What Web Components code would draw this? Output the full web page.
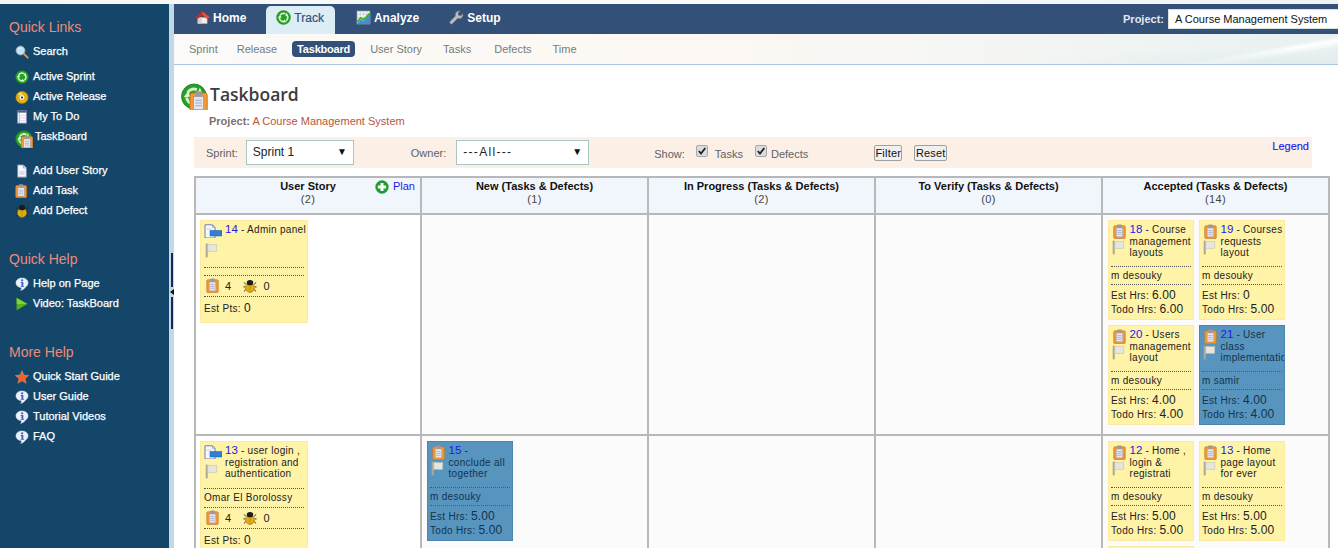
<!DOCTYPE html>
<html>
<head>
<meta charset="utf-8">
<title>Taskboard</title>
<style>
  html, body { margin: 0; height: 548px; overflow: hidden; background: #fff; }
  body { font-family: "Liberation Sans", Arial, sans-serif; font-size: 11px; }
</style>
</head>
<body>
<app-shell>
  <side-bar slot="side"></side-bar>
  <top-nav slot="top"></top-nav>
  <sub-nav slot="top"></sub-nav>
  <page-title></page-title>
  <filter-bar></filter-bar>
  <task-board>
    <board-head title="User Story" count="2" plan></board-head>
    <board-head title="New (Tasks &amp; Defects)" count="1"></board-head>
    <board-head title="In Progress (Tasks &amp; Defects)" count="2"></board-head>
    <board-head title="To Verify (Tasks &amp; Defects)" count="0"></board-head>
    <board-head title="Accepted (Tasks &amp; Defects)" count="14"></board-head>

    <board-cell first><story-card num="14" tasks="4" defects="0" pts="0">Admin panel</story-card></board-cell>
    <board-cell></board-cell>
    <board-cell></board-cell>
    <board-cell></board-cell>
    <board-cell>
      <task-card num="18" owner="m desouky" est="6.00" todo="6.00">Course management layouts</task-card>
      <task-card num="19" owner="m desouky" est="0" todo="5.00">Courses requests layout</task-card>
      <task-card num="20" owner="m desouky" est="4.00" todo="4.00">Users management layout</task-card>
      <task-card num="21" owner="m samir" est="4.00" todo="4.00" blue>User class implementation</task-card>
    </board-cell>

    <board-cell first><story-card num="13" owner="Omar El Borolossy" tasks="4" defects="0" pts="0">user login , registration and authentication</story-card></board-cell>
    <board-cell><task-card num="15" owner="m desouky" est="5.00" todo="5.00" blue><br>conclude all together</task-card></board-cell>
    <board-cell></board-cell>
    <board-cell></board-cell>
    <board-cell>
      <task-card num="12" owner="m desouky" est="5.00" todo="5.00">Home , login &amp; registrati</task-card>
      <task-card num="13" owner="m desouky" est="5.00" todo="5.00">Home page layout for ever</task-card>
      <task-card></task-card>
    </board-cell>
  </task-board>
</app-shell>

<script>
const RECYCLE = `
  <circle cx="8" cy="8" r="7.400" fill="#25a025" stroke="#1c7f1c" stroke-width=".5"/>
  <circle cx="8" cy="8" r="4.400" fill="none" stroke="#d4f3c4" stroke-width="1.700" stroke-dasharray="6.200 3" transform="rotate(-30 8 8)"/>
  <path d="M11.500 2.800 13.300 7 9.800 6zM11.300 13 6.800 13.300 8.700 10.200zM1.900 8.400 4.600 4.800 5.800 8.200z" fill="#e2f8d6"/>`;
const CLIP = `
  <rect x=".8" y="1.800" width="12.400" height="14" rx="1.500" fill="#f39a34" stroke="#c87420" stroke-width=".7"/>
  <rect x="3.400" y="4.200" width="7.200" height="9.600" fill="#e4e6f2" stroke="#8f8fa8" stroke-width=".5"/>
  <rect x="4.500" y="0.400" width="5" height="3.600" rx="1" fill="#9a9a9e"/>
  <path d="M4.600 7h4.800M4.600 9h4.800M4.600 11h4.800" stroke="#a4a8c0" stroke-width=".8"/>`;
const INFO = `
  <path d="M8 1C4 1 1 3.400 1 6.600s2.800 5.400 6 5.500c.4 1.300.2 2.400-.6 3.400 2.600-.7 4.500-2 5.700-4 1.800-1 2.900-2.700 2.900-4.900C15 3.400 12 1 8 1z" fill="#eef1fb" stroke="#c4cbe6" stroke-width=".5"/>
  <circle cx="8.200" cy="3.800" r="1.300" fill="#2d63c8"/>
  <path d="M6.600 5.800h2.900v4.400h.9v1H6.500v-1h.9V6.800h-.8z" fill="#2d63c8"/>`;
const FLAG_SHAPE = `
  <rect x="1.800" y="1" width="2.200" height="15" rx=".7" fill="#a9a99c"/>
  <path d="M4 2.500c3-1.400 5 .6 9.500-.6v7.400c-4.500 1.200-6.500-.8-9.500.6z" fill="#e6e6de" stroke="#bdbdb0" stroke-width=".6"/>`;
const BUG = `
  <path d="M3.300 6 1 4M2.500 9H.5M3.300 12 1 14.200M12.700 6 15 4M13.500 9h2M12.700 12l2.300 2.200" stroke="#222" stroke-width="1"/>
  <ellipse cx="8" cy="10" rx="5.300" ry="5.400" fill="#e0ab12" stroke="#8a6a08" stroke-width=".6"/>
  <path d="M8 5v10" stroke="#9c7608" stroke-width=".5"/>
  <ellipse cx="8" cy="4.200" rx="3.700" ry="3" fill="#1c1c1c"/>`;

const ICONS = {
  search: `<circle cx="6.300" cy="6.300" r="5" fill="#bfe3f7" stroke="#9fb0bb" stroke-width="1.100"/><path d="M3.800 5c.8-1.300 2-1.700 3.200-1.500" stroke="#fff" stroke-width="1.100" fill="none"/><path d="m10.300 10.300 4.200 4.200" stroke="#e8923c" stroke-width="2.200" stroke-linecap="round"/>`,
  recycle: RECYCLE,
  cd: `<circle cx="8" cy="8.500" r="7" fill="#e3b016" stroke="#a87e08" stroke-width=".7"/><path d="M3 5.500A6 6 0 0 1 8 2.700v3.300z" fill="#f7dc70"/><circle cx="8" cy="8.500" r="2.800" fill="#f5f1e0"/><circle cx="8" cy="8.500" r="1.200" fill="#222"/>`,
  notepad: `<rect x="3" y="1" width="10" height="14" fill="#fbfbff" stroke="#8e92b8" stroke-width="1"/><rect x="3" y="1" width="10" height="2" fill="#555a70"/><path d="M5 3v12" stroke="#e28b86" stroke-width=".8"/><path d="M5 6h8M5 9h8M5 12h8" stroke="#c6cbe4" stroke-width=".7"/>`,
  doc: `<path d="M3 1h6.500L13 4.500V15H3z" fill="#f6f7fc" stroke="#7c86ac" stroke-width="1"/><path d="M9.500 1v3.500H13" fill="#dfe3f2" stroke="#7c86ac" stroke-width=".7"/><path d="M5 8h6v4.500H5z" fill="#d7dcee"/>`,
  clip: CLIP,
  bug: BUG,
  info: INFO,
  play: `<path d="M2 1v14l12-7z" fill="#56b51e" stroke="#3c8f12" stroke-width=".6"/><path d="M2 1v7h12z" fill="#82d23a"/>`,
  star: `<path d="M8 .8 10.200 5.800l5.300.5-4 3.600 1.200 5.300L8 12.400 3.300 15.200l1.200-5.300-4-3.600 5.300-.5z" fill="#f2602d" stroke="#e8a488" stroke-width=".5"/>`,
  home: `<path d="M3 8h10v6.500H3z" fill="#f3eee8" stroke="#b8ada0" stroke-width=".5"/><path d="M3 8h4v6.500H3z" fill="#d9cfc2"/><path d="M.2 8 8 1.200 15.800 8 13 9.400 8 5.300 3 9.400z" fill="#cf2b1f"/><path d="M8 1.200 15.800 8 13 9.400 8 5.300z" fill="#e8503a"/>`,
  chart: `<rect x="1" y="1" width="14" height="14" fill="#f4f6fa" stroke="#7e8794" stroke-width=".7"/><path d="M1 4.500h14M1 8h14M1 11.500h14M4.500 1v14M8 1v14M11.500 1v14" stroke="#aab2bf" stroke-width=".5"/><path d="M1 15l4-5 3 2 7-8v11z" fill="#3f8fd8"/><path d="M1 13l4-4.500 3 2 7-7" fill="none" stroke="#38b526" stroke-width="2"/>`,
  wrench: `<path d="M10.500 1a4 4 0 0 0-3.600 5.400L1.300 12a1.700 1.700 0 0 0 2.500 2.500l5.600-5.600A4 4 0 0 0 14.800 4l-2.300 2.200-2.300-.6-.6-2.300L12 1.200A4 4 0 0 0 10.500 1z" fill="#b9bcc0" stroke="#6e7276" stroke-width=".6"/>`,
  story: `<path d="M1 .8h7.500L11 3.300V14H1z" fill="#f6f8fd" stroke="#6d7fb0" stroke-width="1"/><path d="M8.500.8v2.500H11" fill="none" stroke="#6d7fb0" stroke-width=".6"/><path d="M2.500 5h5" stroke="#b7c2de" stroke-width=".8"/><rect x="6" y="6.500" width="12" height="5.500" fill="#2f7fd6" stroke="#1f5fae" stroke-width=".5"/>`,
  flag: FLAG_SHAPE,
  plus: `<circle cx="8" cy="8" r="7.300" fill="#1d9e2b" stroke="#14802a" stroke-width=".5"/><path d="M6.300 3.300h3.400v3h3v3.400h-3v3H6.300v-3h-3V6.300h3z" fill="#fff"/>`,
  board: `<g>${RECYCLE}</g><g transform="translate(5 4.500) scale(.82)">${CLIP}</g>`
};

class UiIcon extends HTMLElement {
  connectedCallback() {
    const name = this.getAttribute("name");
    const w = this.getAttribute("w") || 16;
    const h = this.getAttribute("h") || w;
    const box = this.getAttribute("box") || "0 0 16 16";
    this.attachShadow({ mode: "open" }).innerHTML = `
      <style>:host{display:inline-block;width:${w}px;height:${h}px;line-height:0;flex:none}</style>
      <svg xmlns="http://www.w3.org/2000/svg" width="${w}" height="${h}" viewBox="${box}">${ICONS[name]}</svg>`;
  }
}
customElements.define("ui-icon", UiIcon);

class AppShell extends HTMLElement {
  constructor() {
    super();
    this.attachShadow({ mode: "open" }).innerHTML = `
      <style>
        :host { display: block; width: 1338px; height: 548px; overflow: hidden; background: linear-gradient(90deg,#f4f6f6,#fbfbfa 50%,#eef3f4); }
        .wrap { display: flex; height: 544px; margin-top: 4px; }
        .strip { width: 5px; background: #c3d8e6; padding-top: 249px; box-sizing: border-box; display: flex; flex-direction: column; align-items: center; flex: none; }
        .line { width: 2px; background: #16285e; margin-left: 1px; }
        .arrow { width: 0; height: 0; border: 3.500px solid transparent; border-right: 4px solid #111; border-left: 0; margin: 2px 0 2px; }
        main { flex: 1; min-width: 0; display: flex; flex-direction: column; overflow: hidden; }
        .page { flex: 1; background: #fff; padding: 18px 0 0 6px; overflow: hidden; }
      </style>
      <div class="wrap">
        <slot name="side"></slot>
        <div class="strip"><div class="line" style="height:34px"></div><div class="arrow"></div><div class="line" style="height:32px"></div></div>
        <main>
          <slot name="top"></slot>
          <div class="page"><slot></slot></div>
        </main>
      </div>`;
  }
}
customElements.define("app-shell", AppShell);

class SideBar extends HTMLElement {
  constructor() {
    super();
    const link = (icon, text, extra = "") =>
      `<a class="${extra}"><ui-icon name="${icon}" w="${icon === "board" ? 18 : 14}" h="${icon === "board" ? 18 : 14}"></ui-icon><span>${text}</span></a>`;
    this.attachShadow({ mode: "open" }).innerHTML = `
      <style>
        :host { display: block; width: 169px; flex: none; background: #14466a; color: #fff; padding-top: 14px; box-sizing: border-box; }
        h3 { margin: 0 0 6px 9px; font: 14px/18px "Liberation Sans", Arial, sans-serif; color: #ee8a78; }
        .group { margin-bottom: 5px; }
        a { display: flex; align-items: center; height: 20px; padding-left: 15px; gap: 4px; font-size: 11px; -webkit-text-stroke: .25px #fff; white-space: nowrap; }
        a span { margin-top: -2px; }
        a.tb { padding-left: 15px; gap: 2px; }
        a.tb ui-icon { margin-top: 4px; }
        a.tb span { margin-top: -2px; }
        .sec { margin-top: 29px; }
        .adds { margin-top: 14px; }
      </style>
      <h3>Quick Links</h3>
      <div class="group">${link("search", "Search")}</div>
      <div>
        ${link("recycle", "Active Sprint")}
        ${link("cd", "Active Release")}
        ${link("notepad", "My To Do")}
        ${link("board", "TaskBoard", "tb")}
      </div>
      <div class="adds">
        ${link("doc", "Add User Story")}
        ${link("clip", "Add Task")}
        ${link("bug", "Add Defect")}
      </div>
      <div class="sec">
        <h3>Quick Help</h3>
        ${link("info", "Help on Page")}
        ${link("play", "Video: TaskBoard")}
      </div>
      <div class="sec">
        <h3>More Help</h3>
        ${link("star", "Quick Start Guide")}
        ${link("info", "User Guide")}
        ${link("info", "Tutorial Videos")}
        ${link("info", "FAQ")}
      </div>`;
  }
}
customElements.define("side-bar", SideBar);

class TopNav extends HTMLElement {
  constructor() {
    super();
    const tab = (icon, text, cls = "") => `<a class="${cls}"><ui-icon name="${icon}" w="15" h="15"></ui-icon>${text}</a>`;
    this.attachShadow({ mode: "open" }).innerHTML = `
      <style>
        :host { display: flex; align-items: flex-end; height: 30px; background: #325078; padding-left: 21px; color: #fff; flex: none; }
        a { display: flex; align-items: center; gap: 3px; height: 28px; font-weight: bold; font-size: 12px; padding-bottom: 5px; box-sizing: border-box; }
        a.on { background: #dcedf5; color: #325078; border-radius: 5px 5px 0 0; padding: 0 11px 5px 10px; margin: 0 21px 0 20px; font-weight: normal; -webkit-text-stroke: .2px #325078; }
        .tabs { display: flex; }
        .tabs a.far { margin-left: 30px; }
        .proj { margin-left: auto; display: flex; align-items: center; gap: 4px; height: 30px; font-weight: bold; font-size: 11px; color: #e4e8ee; }
        .proj div { width: 170px; height: 20px; box-sizing: border-box; background: #fff; border: 1px solid #d5e3dc; border-right: 0; color: #111; font: 11px/19px "Liberation Sans", Arial, sans-serif; padding-left: 6px; white-space: nowrap; overflow: hidden; }
      </style>
      <div class="tabs">
        ${tab("home", "Home")}
        ${tab("recycle", "Track", "on")}
        ${tab("chart", "Analyze")}
        ${tab("wrench", "Setup", "far")}
      </div>
      <div class="proj">Project: <div>A Course Management System</div></div>`;
  }
}
customElements.define("top-nav", TopNav);

class SubNav extends HTMLElement {
  constructor() {
    super();
    const items = [["Sprint", 0], ["Release", -1], ["Taskboard", 0], ["User Story", 0], ["Tasks", 1], ["Defects", 3], ["Time", 1]];
    this.attachShadow({ mode: "open" }).innerHTML = `
      <style>
        :host { display: flex; align-items: center; gap: 10px; height: 31px; box-sizing: border-box; padding: 0 0 1px 10px; border-bottom: 1px solid #a9c4e0; flex: none;
          background:
            radial-gradient(ellipse 300px 16px at 1150px 30px, #e2ecec, transparent),
            linear-gradient(170deg, transparent 88%, #fff 90%, transparent 93%),
            linear-gradient(90deg, #fbfaf8, #fdf8f3 45%, #f3f5f3 75%, #e8f0f1); }
        a { padding: 2px 5px; font-size: 11px; line-height: 12px; color: #6f7d80; border-radius: 4px; }
        a.on { background: #325078; color: #fff; font-weight: bold; letter-spacing: -.2px; }
      </style>
      ${items.map(([t, off]) => `<a class="${t === "Taskboard" ? "on" : ""}" style="margin-left:${off}px">${t}</a>`).join("")}`;
  }
}
customElements.define("sub-nav", SubNav);

class PageTitle extends HTMLElement {
  constructor() {
    super();
    this.attachShadow({ mode: "open" }).innerHTML = `
      <style>
        :host { display: block; }
        .row { display: flex; align-items: center; height: 27px; gap: 2px; }
        h1 { margin: -5px 0 0; font: 600 17.500px/22px "Open Sans", Verdana, sans-serif; color: #3c3c3c; }
        p { margin: 4px 0 0 29px; font-size: 11px; line-height: 14px; color: #b5563f; height: 23px; }
        b { color: #7b6f6f; }
      </style>
      <div class="row"><ui-icon name="board" w="28" h="27"></ui-icon><h1>Taskboard</h1></div>
      <p><b>Project:</b> A Course Management System</p>`;
  }
}
customElements.define("page-title", PageTitle);

class FilterBar extends HTMLElement {
  constructor() {
    super();
    const box = `<svg width="12" height="12" viewBox="0 0 12 12"><rect x=".5" y=".5" width="11" height="11" rx="1.500" fill="#dcdcdc" stroke="#a8a8a8"/><path d="M2.800 6 5 8.500 9.300 3" fill="none" stroke="#222" stroke-width="1.800"/></svg>`;
    this.attachShadow({ mode: "open" }).innerHTML = `
      <style>
        :host { display: flex; align-items: center; width: 1118px; height: 31px; margin: 0 0 8px 14px; padding-left: 12px; box-sizing: border-box; background: #fcefe6; color: #5d6266; font-size: 11px; }
        .sel { display: flex; align-items: center; justify-content: space-between; height: 25px; box-sizing: border-box; background: #fff; border: 1px solid #a9c6c0; padding: 0 6px; color: #222; font-size: 12px; margin-top: -1px; }
        .sel i { font-style: normal; font-size: 10px; color: #111; margin-top: -2px; }
        .show { display: flex; align-items: center; margin-top: 3px; }
        svg { flex: none; margin-top: -6px; }
        button { font: 11px "Liberation Sans", Arial, sans-serif; letter-spacing: .2px; height: 16px; padding: 0; background: #f0f0f0; border: 1px solid #a0a0a0; border-radius: 2px; color: #111; margin-top: 0; }
        .legend { color: #1a1aee; margin-left: auto; margin-right: 3px; align-self: flex-start; margin-top: 3px; line-height: 13px; -webkit-text-stroke: .15px #1a1aee; }
      </style>
      <span>Sprint:</span>
      <div class="sel" style="width:108px;margin-left:8px"><span>Sprint 1</span><i>▼</i></div>
      <span style="margin-left:57px">Owner:</span>
      <div class="sel" style="width:133px;margin-left:10px"><span style="letter-spacing:1.300px">---All---</span><i>▼</i></div>
      <div class="show" style="margin-left:65px">
        <span>Show:</span>
        <span style="margin-left:11px;display:flex">${box}</span><span style="margin-left:7px">Tasks</span>
        <span style="margin-left:12px;display:flex">${box}</span><span style="margin-left:4px">Defects</span>
      </div>
      <button style="width:28px;margin-left:66px">Filter</button>
      <button style="width:33px;margin-left:12px">Reset</button>
      <span class="legend">Legend</span>`;
  }
}
customElements.define("filter-bar", FilterBar);

class TaskBoard extends HTMLElement {
  constructor() {
    super();
    this.attachShadow({ mode: "open" }).innerHTML = `
      <style>
        :host { display: grid; width: 1136px; box-sizing: border-box; margin-left: 14px; padding: 2px; gap: 2px; background: #b8b8b8;
          grid-template-columns: 224px repeat(4, 225px); grid-template-rows: 35px 219px 300px; }
      </style>
      <slot></slot>`;
  }
}
customElements.define("task-board", TaskBoard);

class BoardHead extends HTMLElement {
  connectedCallback() {
    const plan = this.hasAttribute("plan")
      ? `<a><ui-icon name="plus" w="14" h="14"></ui-icon>Plan</a>` : "";
    this.attachShadow({ mode: "open" }).innerHTML = `
      <style>
        :host { display: grid; grid-template-columns: 1fr auto 1fr; background: #f1f6fd; text-align: center; padding-top: 2px; font-size: 11px; line-height: 13px; color: #444; }
        b { display: block; color: #111; }
        a { justify-self: end; display: flex; gap: 4px; color: #1a1aee; margin-right: 5px; line-height: 12px; }
        span { font-size: 11px; letter-spacing: .3px; }
      </style>
      <div></div>
      <div><b>${this.getAttribute("title")}</b><span>(${this.getAttribute("count")})</span></div>
      ${plan}`;
  }
}
customElements.define("board-head", BoardHead);

class BoardCell extends HTMLElement {
  constructor() {
    super();
    this.attachShadow({ mode: "open" }).innerHTML = `
      <style>
        :host { display: flex; flex-wrap: wrap; align-content: flex-start; gap: 5px; padding: 5px; box-sizing: border-box; background: #fbfbfb; overflow: hidden; }
        :host([first]) { background: #fff; padding-left: 4px; }
      </style>
      <slot></slot>`;
  }
}
customElements.define("board-cell", BoardCell);

const CARD_CSS = `
  :host { display: block; box-sizing: border-box; background: #fff3a8; border: 1px solid #fde9a0; color: #222; font-size: 10px; letter-spacing: .3px; overflow: hidden; }
  :host([blue]) { background: #5795bf; border-color: #4a86b0; color: #13334d; }
  .head { display: flex; box-sizing: border-box; }
  .icons { display: flex; flex-direction: column; flex: none; }
  .title { line-height: 11.500px; white-space: normal; min-width: 0; }
  .num { color: #1a1aee; font-size: 11.500px; letter-spacing: 0; }
  .sec { border-top: 1px dotted #555; }
  :host([blue]) .sec { border-color: #4c5f55; }
  .big { font-size: 12px; letter-spacing: .1px; }
`;

class TaskCard extends HTMLElement {
  connectedCallback() {
    const num = this.getAttribute("num");
    const body = num ? `
      <div class="head">
        <div class="icons">
          <ui-icon name="clip" w="13" h="15" box="0 0 14 16" style="margin-left:2px"></ui-icon>
          <ui-icon name="flag" w="15" h="16"></ui-icon>
        </div>
        <div class="title"><span class="num">${num}</span> - <slot></slot></div>
      </div>
      <div class="sec owner">${this.getAttribute("owner")}</div>
      <div class="sec hrs">
        <div>Est Hrs: <span class="big">${this.getAttribute("est")}</span></div>
        <div>Todo Hrs: <span class="big">${this.getAttribute("todo")}</span></div>
      </div>` : "";
    this.attachShadow({ mode: "open" }).innerHTML = `
      <style>${CARD_CSS}
        :host { width: 86px; height: 100px; padding: 3px 2px; }
        .head { height: 42px; margin-right: -6px; }
        .icons { width: 18.500px; }
        .owner { height: 17px; line-height: 17px; }
        .hrs { padding-top: 4px; line-height: 13.500px; white-space: nowrap; }
      </style>${body}`;
  }
}
customElements.define("task-card", TaskCard);

class StoryCard extends HTMLElement {
  connectedCallback() {
    this.attachShadow({ mode: "open" }).innerHTML = `
      <style>${CARD_CSS}
        :host { width: 108px; min-height: 101px; padding: 3px 3px; }
        .head { height: 43px; margin-right: -3px; }
        .icons { width: 21px; }
        .icons ui-icon + ui-icon { margin-top: 4px; }
        .owner { height: 7px; line-height: 17px; }
        .owner.full { height: 18px; }
        .counts { display: flex; align-items: center; height: 21px; padding-bottom: 1px; box-sizing: border-box; font-size: 11px; }
        .est { height: 22px; line-height: 23px; }
        .counts span { margin: 0 12px 0 6px; }
      </style>
      <div class="head">
        <div class="icons">
          <ui-icon name="story" w="18" h="14" box="0 0 18 14"></ui-icon>
          <ui-icon name="flag" w="15" h="16"></ui-icon>
        </div>
        <div class="title"><span class="num">${this.getAttribute("num")}</span> - <slot></slot></div>
      </div>
      <div class="sec owner ${this.hasAttribute("owner") ? "full" : ""}">${this.getAttribute("owner") || ""}</div>
      <div class="sec counts">
        <ui-icon name="clip" w="13" h="15" box="0 0 14 16" style="margin-left:2px"></ui-icon><span>${this.getAttribute("tasks")}</span>
        <ui-icon name="bug" w="14" h="14"></ui-icon><span>${this.getAttribute("defects")}</span>
      </div>
      <div class="sec est">Est Pts: <span class="big">${this.getAttribute("pts")}</span></div>`;
  }
}
customElements.define("story-card", StoryCard);
</script>
</body>
</html>
